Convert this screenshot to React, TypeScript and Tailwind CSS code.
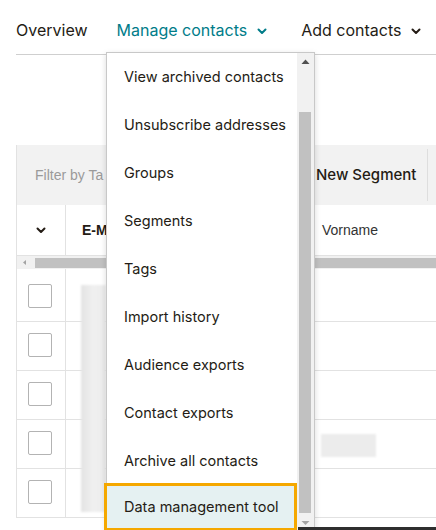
import React from "react";

const Chevron = ({ className = "" }: { className?: string }) => (
  <svg width="10" height="7" viewBox="0 0 10 7" className={className}>
    <path d="M1.5 1.5 L5 5 L8.5 1.5" fill="none" stroke="currentColor" strokeWidth="2" strokeLinecap="round" strokeLinejoin="round" />
  </svg>
);

const items = [
  "View archived contacts",
  "Unsubscribe addresses",
  "Groups",
  "Segments",
  "Tags",
  "Import history",
  "Audience exports",
  "Contact exports",
  "Archive all contacts",
];

export default function App() {
  const rows = [0, 1, 2, 3, 4];
  return (
    <div className="relative w-[436px] h-[530px] overflow-hidden bg-white text-[#241c15]" style={{ fontFamily: "Inter, 'Open Sans', sans-serif" }}>
      {/* Nav */}
      <div className="ml-4 h-[55px] flex items-center border-b border-[#cfcfcf] pt-[6px] text-[16px]">
        <span>Overview</span>
        <span className="ml-[29px] flex items-center gap-[10px] text-[#007c89]">
          Manage contacts
          <Chevron className="mt-[2px]" />
        </span>
        <span className="ml-[34px] flex items-center gap-[10px]">
          Add contacts
          <Chevron className="mt-[2px]" />
        </span>
      </div>

      {/* Table */}
      <div className="ml-4 mt-[90px] border-l border-[#e2e2e2]" style={{ fontFamily: "'Liberation Sans', Arial, sans-serif" }}>
        <div className="h-[60px] bg-[#f2f2f2] flex items-center relative">
          <span className="ml-[18px] whitespace-nowrap text-[14px] text-[#9a9a9a]">Filter by Ta</span>
          <span className="absolute left-[299px] text-[15px] font-medium text-[#241c15]" style={{ fontFamily: "Inter, sans-serif" }}>New Segment</span>
          <div className="absolute left-[410px] top-[4px] bottom-[4px] w-px bg-[#dedede]" />
        </div>
        <div className="h-[51px] flex border-b border-[#e2e2e2]">
          <div className="w-[49px] border-r border-[#e2e2e2] flex items-center justify-center">
            <Chevron className="text-[#241c15]" />
          </div>
          <div className="flex-1 flex items-center pl-[16px] relative">
            <span className="whitespace-nowrap text-[14px] font-bold">E-M</span>
            <span className="absolute left-[256px] text-[14px] text-[#333]">Vorname</span>
          </div>
        </div>
        <div className="h-[13px] bg-[#f1f1f1] flex items-center">
          <svg width="16" height="13" viewBox="0 0 16 13">
            <path d="M9 4 L6 6.5 L9 9 Z" fill="#a3a3a3" />
          </svg>
          <div className="flex-1 h-[10px] ml-[2px] bg-[#c1c1c1]" />
        </div>
        {rows.map((r) => (
          <div key={r} className={`flex ${r === 0 ? "h-[53px]" : "h-[49px]"} border-b border-[#e2e2e2]`}>
            <div className={`w-[49px] border-r border-[#e2e2e2] flex justify-start pl-[11px] ${r === 0 ? "pt-[15px]" : "pt-[11px]"}`}>
              <div className="w-[24px] h-[24px] rounded-[2px] border border-[#b3b3b3] bg-white" />
            </div>
            <div className="flex-1 relative">
              {r === 3 && <div className="absolute left-[255px] top-[14px] w-[55px] h-[23px] bg-[#ececec] blur-[1px]" />}
            </div>
          </div>
        ))}
      </div>

      {/* Blurred email column */}
      <div className="absolute left-[81px] top-[285px] w-[25px] h-[227px] bg-gradient-to-r from-[#e4e4e4] via-[#f0f0f0] to-[#ebebeb] blur-[1px]" />

      {/* Dropdown */}
      <div className="absolute left-[106px] top-[52px] w-[209px] h-[490px] bg-white border border-[#c8c8c8] shadow-[0_2px_6px_rgba(0,0,0,0.15)] flex">
        <div className="flex-1 flex flex-col">
          {items.map((t) => (
            <div key={t} className="h-[48px] shrink-0 flex items-center pl-[17px] text-[14.5px] text-[#241c15]">
              {t}
            </div>
          ))}
          <div className="h-[48px] shrink-0 -ml-[3px] -mt-[2px] flex items-center pl-[17px] text-[14.5px] text-[#241c15] bg-[#e5f1f2] border-[3px] border-[#f5a800]">
            Data management tool
          </div>
        </div>
        <div className="w-[17px] bg-[#f1f1f1] flex flex-col items-center relative">
          <svg width="17" height="17" viewBox="0 0 17 17" className="shrink-0">
            <path d="M4.5 11 L8.5 6.5 L12.5 11 Z" fill="#505050" />
          </svg>
          <div className="absolute left-[2px] top-[59px] w-[12px] h-[401px] bg-[#c1c1c1]" />
          <svg width="17" height="17" viewBox="0 0 17 17" className="absolute top-[462px]">
            <path d="M4.5 6 L8.5 10 L12.5 6 Z" fill="#a3a3a3" />
          </svg>
        </div>
      </div>

      {/* dark bar bottom right */}
      <div className="absolute left-[298px] top-[527px] w-[138px] h-[3px] bg-[#2e2e2e]" />
    </div>
  );
}
